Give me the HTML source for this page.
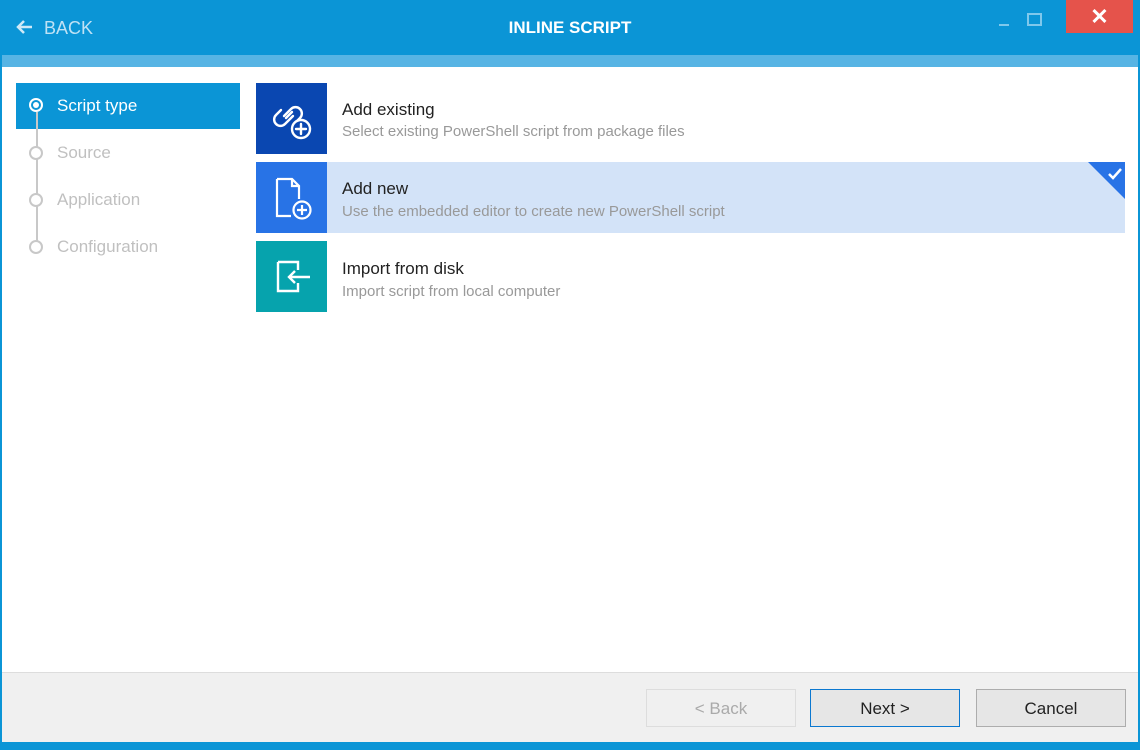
<!DOCTYPE html>
<html><head><style>
*{margin:0;padding:0;box-sizing:border-box}
body{width:1140px;height:750px;background:#0b95d6;font-family:"Liberation Sans",sans-serif;position:relative;overflow:hidden}
.abs{position:absolute}
.top{left:0;top:0;width:1140px;height:55px;background:#0b95d6}
.stripe{left:2px;top:55px;width:1136px;height:12px;background:#57b4e4}
.main{left:2px;top:67px;width:1136px;height:605px;background:#fff}
.foot{left:2px;top:672px;width:1136px;height:70px;background:#f0f0f0;border-top:1px solid #ddd}
.btn{top:689px;width:150px;height:38px;border:1px solid #adadad;background:#e6e6e6;font-size:17px;color:#222;text-align:center;line-height:38px}
.step{left:57px;font-size:17px;color:#c0c0c0}
.dot{left:29px;width:14px;height:14px;border:2px solid #c8c8c8;border-radius:50%;background:#fff}
.ic{left:256px;width:71px;height:71px}
.t1{left:342px;font-size:17px;color:#222}
.t2{left:342px;font-size:15px;color:#999}
</style></head><body>
<div class="abs top"></div>
<svg class="abs" style="left:16px;top:19px" width="18" height="16" viewBox="0 0 18 16"><path d="M8 2L2 8L8 14M2 8H16" stroke="#cfe9f7" stroke-width="2.5" fill="none"/></svg>
<div class="abs" style="left:44px;top:18px;font-size:18px;color:#bfe2f5">BACK</div>
<div class="abs" style="left:0;width:1140px;top:18px;text-align:center;font-size:17px;font-weight:bold;color:#fff">INLINE SCRIPT</div>
<div class="abs" style="left:999px;top:24px;width:10px;height:2px;background:#7fc8ec"></div>
<div class="abs" style="left:1027px;top:13px;width:15px;height:13px;border:2px solid #7fc8ec"></div>
<div class="abs" style="left:1066px;top:0;width:67px;height:33px;background:#e5534b;color:#fff;font-size:22px;font-weight:bold;text-align:center;line-height:33px">✕</div>
<div class="abs stripe"></div>
<div class="abs main"></div>
<div class="abs" style="left:16px;top:83px;width:224px;height:46px;background:#0b95d6"></div>
<div class="abs" style="left:36px;top:112px;width:2px;height:135px;background:#c8c8c8"></div>
<div class="abs dot" style="top:98px;border-color:#fff;background:#0b95d6"></div>
<div class="abs" style="left:33px;top:102px;width:6px;height:6px;border-radius:50%;background:#fff"></div>
<div class="abs" style="left:57px;top:96px;font-size:17px;color:#fff">Script type</div>
<div class="abs dot" style="top:146px"></div><div class="abs step" style="top:143px">Source</div>
<div class="abs dot" style="top:193px"></div><div class="abs step" style="top:190px">Application</div>
<div class="abs dot" style="top:240px"></div><div class="abs step" style="top:237px">Configuration</div>

<div class="abs ic" style="top:83px;background:#0a47b1"></div>
<svg class="abs" style="left:256px;top:83px" width="71" height="71" viewBox="0 0 71 71" fill="none" stroke="#fff" stroke-width="2.4" stroke-linecap="round"><path d="M28 33l7-7a6 6 0 019 9l-3 3"/><path d="M37 33l-8 8a6 6 0 01-9-9l5-5"/><path d="M30 35l6-6"/><circle cx="45" cy="46" r="9" fill="#0a47b1"/><path d="M45 41v10M40 46h10"/></svg>
<div class="abs t1" style="top:100px">Add existing</div>
<div class="abs t2" style="top:123px">Select existing PowerShell script from package files</div>

<div class="abs" style="left:327px;top:162px;width:798px;height:71px;background:#d3e3f8"></div>
<div class="abs ic" style="top:162px;background:#2873e6"></div>
<svg class="abs" style="left:256px;top:162px" width="71" height="71" viewBox="0 0 71 71" fill="none" stroke="#fff" stroke-width="2.2"><path d="M21 17h15l7 7v13M35 54H21V17M36 17v7h7"/><circle cx="46" cy="48" r="8.5" fill="#2873e6"/><path d="M46 43v10M41 48h10"/></svg>
<svg class="abs" style="left:1088px;top:162px" width="37" height="37"><path d="M0 0H37V37Z" fill="#2873e6"/><path d="M21 12l4 4 8-9" stroke="#fff" stroke-width="2.5" fill="none"/></svg>
<div class="abs t1" style="top:179px">Add new</div>
<div class="abs t2" style="top:203px">Use the embedded editor to create new PowerShell script</div>

<div class="abs ic" style="top:241px;background:#06a3ad"></div>
<svg class="abs" style="left:256px;top:241px" width="71" height="71" viewBox="0 0 71 71" fill="none" stroke="#fff" stroke-width="2.4"><path d="M22 21h20v8M42 42v8H22V21M54 36H33M39 30l-6 6 6 6"/></svg>
<div class="abs t1" style="top:259px">Import from disk</div>
<div class="abs t2" style="top:283px">Import script from local computer</div>

<div class="abs foot"></div>
<div class="abs btn" style="left:646px;background:#f0f0f0;border-color:#ddd;color:#aaa">&lt; Back</div>
<div class="abs btn" style="left:810px;border-color:#0b78d0">Next &gt;</div>
<div class="abs btn" style="left:976px">Cancel</div>
</body></html>
